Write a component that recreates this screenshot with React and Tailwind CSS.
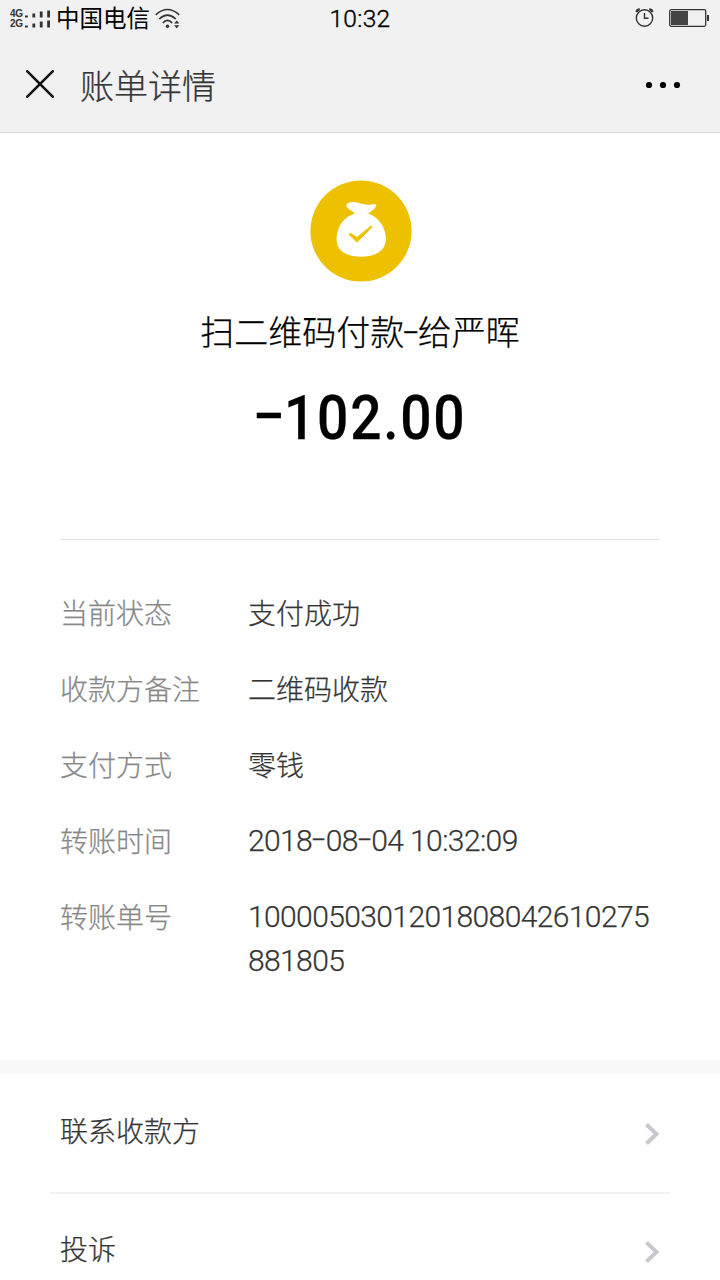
const bars = [2, 4, 6, 7];

const details = [
  { label: "当前状态", value: "支付成功" },
  { label: "收款方备注", value: "二维码收款" },
  { label: "支付方式", value: "零钱" },
  { label: "转账时间", value: "2018-08-04 10:32:09", numeric: true },
  { label: "转账单号", value: "1000050301201808042610275881805", numeric: true },
];

const links = ["联系收款方", "投诉"];

// widens each hyphen so that it fills its slot between the digits
function Dashed({ text }) {
  return text.split("-").map((part, i) => (
    <span key={i}>
      {i > 0 && (
        <span className="inline-block w-[13.5px] origin-center -translate-y-[2px] scale-x-[1.6] text-center font-['Roboto',sans-serif] tracking-normal">
          -
        </span>
      )}
      {part}
    </span>
  ));
}

function Signal({ label }) {
  return (
    <div className="flex h-[10px] items-center">
      <span className="w-[14px] font-['Liberation_Sans',sans-serif] text-[10px] leading-[10px] font-bold tracking-[-0.4px] text-[#333] [-webkit-text-stroke:0px]">
        {label}
      </span>
      <svg width="27" height="10" viewBox="0 0 27 10" fill="#333">
        {bars.map((h, i) => (
          <rect key={i} x={1 + i * 7.4} y={8.5 - h} width="2.8" height={h} />
        ))}
      </svg>
    </div>
  );
}

function WifiIcon() {
  return (
    <svg width="26" height="22" viewBox="0 0 26 22" fill="none" stroke="#333" strokeWidth="1.6">
      <path d="M0.8 6.8Q12.5 -3.8 24.2 6.8" />
      <path d="M4.3 11Q12.5 3.2 20.7 11" />
      <path d="M7.8 15Q12.5 9.8 17.2 15" />
      <circle cx="12.5" cy="18.3" r="1.7" fill="#333" stroke="none" />
      <path d="M19 15.5L21.7 12.5L24.4 15.5ZM19 17.2L21.7 20.2L24.4 17.2Z" fill="#333" stroke="none" />
    </svg>
  );
}

function AlarmIcon() {
  return (
    <svg className="-mt-[2px]" width="20" height="20" viewBox="0 0 20 20" fill="none" stroke="#333">
      <circle cx="9.5" cy="10" r="8.2" strokeWidth="1.4" />
      <path d="M9.5 5V10.2H13.5" strokeWidth="1.4" />
      <path d="M1.6 4.2Q1.8 1.3 4.8 1.3M14.2 1.3Q17.2 1.3 17.4 4.2" strokeWidth="2.2" />
    </svg>
  );
}

function BatteryIcon() {
  return (
    <svg className="-mt-[2px]" width="41" height="19" viewBox="0 0 41 19">
      <rect x="0.7" y="0.7" width="36" height="16.6" rx="1.5" fill="none" stroke="#333" strokeWidth="1.3" />
      <rect x="2" y="2" width="17" height="14" fill="#444" />
      <rect x="38" y="6" width="2" height="6" fill="#333" />
    </svg>
  );
}

function MoneyBag() {
  return (
    <svg width="102" height="102" viewBox="0 0 102 102">
      <circle cx="51" cy="51" r="50.6" fill="#edc000" />
      <path
        d="M45 33.5C42 30.5 36.5 29 36.5 25.5C37 21.5 44 21.8 48 22.5C53 24.6 57 25.5 65.5 23.9C68 25.5 64 30 58 33.5C68 36.5 76 47 76 59C75.5 72 64 76.7 51 76.7C38 76.7 26.5 72 26.5 59C27 46 34 36.5 45 33.5Z"
        fill="#fff"
      />
      <path d="M38.5 54.5L40.5 52.8L47 56.9L61 45.5L62.5 47L47 62.5Z" fill="#edc000" />
    </svg>
  );
}

function StatusBar() {
  return (
    <div className="grid h-[38px] grid-cols-3 items-center text-black">
      <div className="flex items-center pl-[10px]">
        <div className="flex w-[46px] flex-col">
          <Signal label="4G" />
          <Signal label="2G" />
        </div>
        <span className="mr-[5px] pb-[3px] text-[23.5px] leading-[35px] font-normal whitespace-nowrap [-webkit-text-stroke:0px]">
          中国电信
        </span>
        <WifiIcon />
      </div>
      <span className="text-center font-['Roboto',sans-serif] text-[24.5px] leading-[38px] tracking-[0.3px] [-webkit-text-stroke:0.4px]">
        10:32
      </span>
      <div className="flex items-center justify-end gap-[14px] pr-[10px]">
        <AlarmIcon />
        <BatteryIcon />
      </div>
    </div>
  );
}

export default function App() {
  return (
    <div className="h-[1280px] w-[720px] overflow-hidden bg-white font-['Noto_Sans_CJK_SC',sans-serif] font-light text-[#353535] [-webkit-text-stroke:0.25px]">
      <header className="h-[133px] border-b border-[#dedede] bg-[#f1f1f1]">
        <StatusBar />
        <div className="flex h-[92px] items-center pr-[38px] pl-[26px]">
          <svg width="28" height="28" viewBox="0 0 28 28" stroke="#111" strokeWidth="2.6" strokeLinecap="round">
            <path d="M1.3 1.3L26.7 26.7M26.7 1.3L1.3 26.7" />
          </svg>
          <h1 className="ml-[26px] flex-1 pt-px text-[34px] leading-[92px]">账单详情</h1>
          <svg className="mt-[2px]" width="38" height="8" viewBox="0 0 38 8" fill="#000">
            <circle cx="5" cy="4" r="3.1" />
            <circle cx="19" cy="4" r="3.1" />
            <circle cx="33" cy="4" r="3.1" />
          </svg>
        </div>
      </header>

      <main>
        <section className="mx-[60px] flex h-[407px] flex-col items-center border-b border-[#e2e2e2] pt-[47px] text-black">
          <div className="ml-[2px]">
            <MoneyBag />
          </div>
          <p className="mt-[24px] text-[34px] leading-[50px]">
            <Dashed text="扫二维码付款-给严晖" />
          </p>
          <p className="mt-[24px] flex scale-x-[0.89] font-['Roboto',sans-serif] text-[62px] leading-[72px] font-medium tracking-[1.9px]">
            <span className="-mt-[2px] text-[54px] tracking-normal">–</span>
            <span>102.00</span>
          </p>
        </section>

        <dl className="flex h-[520px] flex-col gap-8 px-[60px] pt-[51px] text-[28px] leading-[44px]">
          {details.map(({ label, value, numeric }) => (
            <div key={label} className="flex">
              <dt className="-mt-px w-[188px] shrink-0 text-[#888]">{label}</dt>
              <dd
                className={
                  numeric
                    ? "w-[408px] font-['Roboto',sans-serif] text-[30px] tracking-[-0.6px] break-all"
                    : "-mt-px mb-px w-[408px]"
                }
              >
                <Dashed text={value} />
              </dd>
            </div>
          ))}
        </dl>

        <nav className="border-t-[14px] border-[#f8f8f8] px-[50px]">
          {links.map((text, i) => (
            <a
              key={text}
              className={
                i === 0
                  ? "flex h-[120px] items-center justify-between border-b-2 border-[#f1f1f1] px-[10px] text-[28px]"
                  : "flex h-[114px] items-center justify-between px-[10px] text-[28px]"
              }
            >
              <span className="pb-[6px]">{text}</span>
              <svg
                className="mt-[2px]"
                width="15"
                height="22"
                viewBox="0 0 15 22"
                fill="none"
                stroke="#c8c8cd"
                strokeWidth="4"
              >
                <path d="M1.5 1.5L11.5 11L1.5 20.5" />
              </svg>
            </a>
          ))}
        </nav>
      </main>
    </div>
  );
}
